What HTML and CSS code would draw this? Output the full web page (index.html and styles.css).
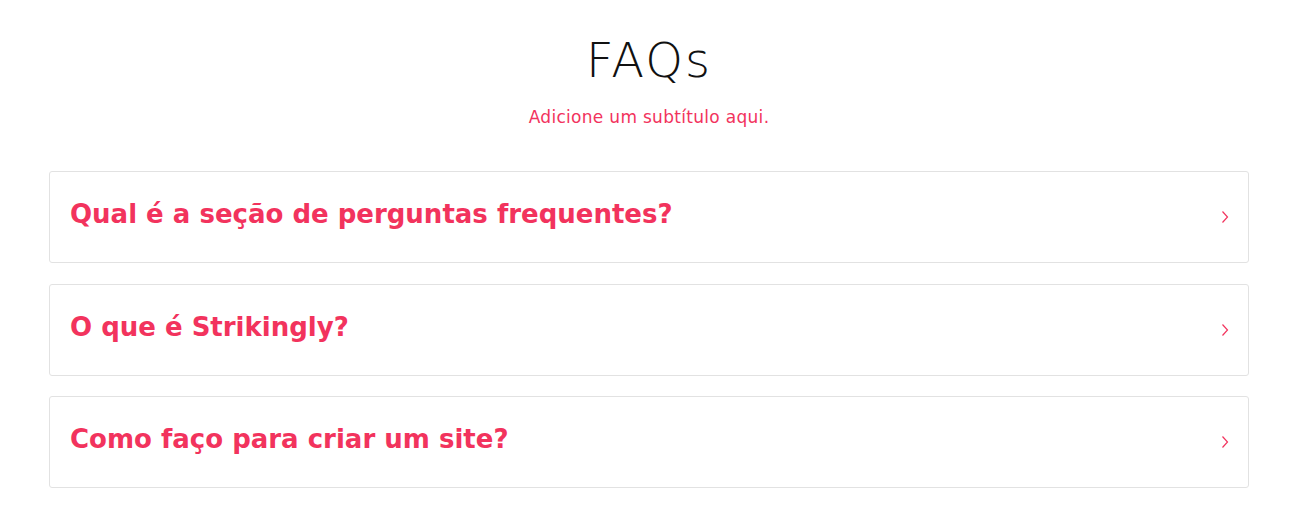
FILE: index.html
```html
<!DOCTYPE html>
<html lang="pt">
<head>
<meta charset="utf-8">
<title>FAQs</title>
<link rel="stylesheet" href="styles.css">
</head>
<body>
<section class="faq">
  <header class="faq-head">
    <h1 class="faq-title">FAQs</h1>
    <p class="faq-subtitle">Adicione um subtítulo aqui.</p>
  </header>
  <div class="faq-list">
    <div class="faq-item">
      <h3 class="faq-question">Qual é a seção de perguntas frequentes?</h3>
      <svg class="faq-chevron" viewBox="0 0 8 14" width="8" height="14"><path d="M1.5 1.5 L6.5 7 L1.5 12.5" fill="none" stroke="currentColor" stroke-width="1.2"/></svg>
    </div>
    <div class="faq-item">
      <h3 class="faq-question">O que é Strikingly?</h3>
      <svg class="faq-chevron" viewBox="0 0 8 14" width="8" height="14"><path d="M1.5 1.5 L6.5 7 L1.5 12.5" fill="none" stroke="currentColor" stroke-width="1.2"/></svg>
    </div>
    <div class="faq-item">
      <h3 class="faq-question">Como faço para criar um site?</h3>
      <svg class="faq-chevron" viewBox="0 0 8 14" width="8" height="14"><path d="M1.5 1.5 L6.5 7 L1.5 12.5" fill="none" stroke="currentColor" stroke-width="1.2"/></svg>
    </div>
  </div>
</section>
</body>
</html>
```
FILE: styles.css
```css
html, body {
  margin: 0;
  padding: 0;
  background: #fff;
}

body {
  font-family: "DejaVu Sans", "Open Sans", sans-serif;
  color: #111;
}

.faq {
  padding: 30px 49px 0 49px;
  width: 1200px;
}

.faq-head {
  text-align: center;
}

.faq-title {
  margin: 0;
  font-size: 48px;
  font-weight: 200;
  line-height: 60px;
  letter-spacing: 2px;
  color: #111;
}

.faq-subtitle {
  margin: 16px 0 0 0;
  font-size: 17px;
  font-weight: 400;
  line-height: 22px;
  letter-spacing: 0.3px;
  color: #f2335d;
}

.faq-list {
  margin-top: 43px;
  display: flex;
  flex-direction: column;
  gap: 20.5px;
}

.faq-item {
  display: flex;
  align-items: center;
  justify-content: space-between;
  padding: 0 19px 6px 20px;
  box-sizing: border-box;
  height: 92px;
  border: 1px solid #e2e2e2;
  border-radius: 3px;
}

.faq-question {
  margin: 0;
  font-size: 26px;
  font-weight: 700;
  line-height: 34px;
  color: #f2335d;
}

.faq-chevron {
  color: #f2335d;
  margin-top: 6px;
}
```
